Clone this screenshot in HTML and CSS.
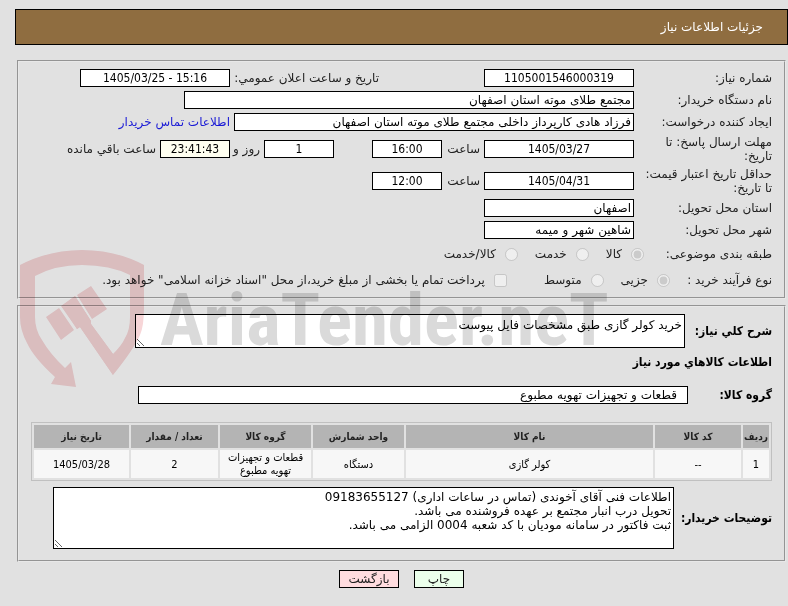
FILE: index.html
```html
<!DOCTYPE html>
<html lang="fa" dir="rtl">
<head>
  <meta charset="UTF-8" />
  <meta name="viewport" content="width=device-width, initial-scale=1" />
  <title>جزئیات اطلاعات نیاز</title>
  <link rel="stylesheet" href="styles.css">
</head>
<body>
  <h1 class="page-title">جزئیات اطلاعات نیاز</h1>

  <form class="need-form">
    <fieldset class="panel info">
      <div class="row">
        <label class="caption" for="needNo">شماره نیاز:</label>
        <input class="box medium center" id="needNo" value="1105001546000319" readonly>
        <label class="push-public" for="publicDate">تاریخ و ساعت اعلان عمومي:</label>
        <input class="box medium center" id="publicDate" dir="ltr" value="1405/03/25 - 15:16" readonly>
      </div>
      <div class="row">
        <label class="caption" for="buyerOrg">نام دستگاه خریدار:</label>
        <input class="box wide" id="buyerOrg" value="مجتمع طلای موته استان اصفهان" readonly>
      </div>
      <div class="row">
        <label class="caption" for="creator">ایجاد کننده درخواست:</label>
        <input class="box large" id="creator" value="فرزاد هادی کارپرداز داخلی مجتمع طلای موته استان اصفهان" readonly>
        <a class="contact" href="#">اطلاعات تماس خریدار</a>
      </div>
      <div class="row">
        <label class="caption" for="replyDate">مهلت ارسال پاسخ: تا تاریخ:</label>
        <input class="box medium center" id="replyDate" value="1405/03/27" readonly>
        <label class="hour" for="replyHour">ساعت</label>
        <input class="box short center" id="replyHour" value="16:00" readonly>
        <input class="box short center push-days" id="daysLeft" value="1" aria-label="روز" readonly>
        <label class="days" for="daysLeft">روز و</label>
        <input class="box short center timer" id="timeLeft" value="23:41:43" readonly>
        <label for="timeLeft">ساعت باقي مانده</label>
      </div>
      <div class="row">
        <label class="caption" for="priceDate">حداقل تاریخ اعتبار قیمت: تا تاریخ:</label>
        <input class="box medium center" id="priceDate" value="1405/04/31" readonly>
        <label class="hour" for="priceHour">ساعت</label>
        <input class="box short center" id="priceHour" value="12:00" readonly>
      </div>
      <div class="row">
        <label class="caption" for="province">استان محل تحویل:</label>
        <input class="box medium" id="province" value="اصفهان" readonly>
      </div>
      <div class="row">
        <label class="caption" for="city">شهر محل تحویل:</label>
        <input class="box medium" id="city" value="شاهین شهر و میمه" readonly>
      </div>
      <div class="row options">
        <span class="caption narrow">طبقه بندی موضوعی:</span>
        <span class="choice first"><input type="radio" name="kind" id="kindGoods" checked disabled><label for="kindGoods">کالا</label></span>
        <span class="choice"><input type="radio" name="kind" id="kindService" disabled><label for="kindService">خدمت</label></span>
        <span class="choice"><input type="radio" name="kind" id="kindBoth" disabled><label for="kindBoth">کالا/خدمت</label></span>
      </div>
      <div class="row options">
        <span class="caption narrow">نوع فرآیند خرید :</span>
        <span class="choice"><input type="radio" name="process" id="procSmall" checked disabled><label for="procSmall">جزیی</label></span>
        <span class="choice"><input type="radio" name="process" id="procMedium" disabled><label for="procMedium">متوسط</label></span>
        <span class="choice treasury"><input type="checkbox" id="treasury" disabled><label for="treasury">پرداخت تمام یا بخشی از مبلغ خرید،از محل "اسناد خزانه اسلامی" خواهد بود.</label></span>
      </div>
    </fieldset>

    <fieldset class="panel goods">
      <div class="row">
        <label class="heading summary-label" for="summary">شرح کلي نیاز:</label>
        <textarea class="box field summary" id="summary" readonly>خرید کولر گازی طبق مشخصات فایل پیوست</textarea>
      </div>
      <h2 class="heading section-title">اطلاعات کالاهاي مورد نیاز</h2>
      <div class="row">
        <label class="heading group-label" for="goodsGroup">گروه کالا:</label>
        <input class="box field group" id="goodsGroup" value="قطعات و تجهیزات تهویه مطبوع" readonly>
      </div>
      <table class="goods-table">
        <colgroup>
          <col class="col-row"><col class="col-code"><col><col class="col-unit"><col class="col-unit"><col class="col-count"><col class="col-date">
        </colgroup>
        <thead>
          <tr><th>ردیف</th><th>کد کالا</th><th>نام کالا</th><th>واحد شمارش</th><th>گروه کالا</th><th>تعداد / مقدار</th><th>تاریخ نیاز</th></tr>
        </thead>
        <tbody>
          <tr><td>1</td><td>--</td><td>کولر گازی</td><td>دستگاه</td><td>قطعات و تجهیزات تهویه مطبوع</td><td>2</td><td>1405/03/28</td></tr>
        </tbody>
      </table>
      <div class="row">
        <label class="heading notes-label" for="notes">توضیحات خریدار:</label>
        <textarea class="box field notes" id="notes" readonly>اطلاعات فنی آقای آخوندی (تماس در ساعات اداری) 09183655127
تحویل درب انبار مجتمع بر عهده فروشنده می باشد.
ثبت فاکتور در سامانه مودیان با کد شعبه 0004 الزامی می باشد.</textarea>
      </div>
    </fieldset>

    <div class="actions">
      <button class="btn print" type="button">چاپ</button>
      <button class="btn back" type="button">بازگشت</button>
    </div>
  </form>

  <div class="watermark" dir="ltr">
    <svg class="shield" width="126" height="140" viewBox="0 0 126 140" aria-hidden="true">
      <path d="M0 15Q29 0 62 0Q96 0 124 15V57Q124 76 120 85Q114 99 93 125L60 77L57 79L41 56L55 46L71 71L71 74L93 104Q102 95 105 88Q110 80 110 67V25Q90 15 62 15Q35 15 15 26V67Q15 80 22 90Q30 104 45 118L51 112L56 137L31 134L35 127Q14 108 7 93Q0 80 0 67Z"/>
      <path d="M42 56L55 46L71 71L71 74L93 104V125L60 77L57 79Z"/>
      <path d="M26 67L39 58L54 80L41 90ZM57 45L71 36L87 59L72 69Z"/>
    </svg>
    <span class="brand">AriaTender.neT</span>
  </div>
</body>
</html>
```
FILE: styles.css
```css
* { box-sizing: border-box; }
body {
  position: relative;
  margin: 0;
  padding: 9px 0 16px 15px;
  background: #e1e1e1;
  color: #222;
  font-family: "DejaVu Sans", Tahoma, sans-serif;
  font-size: 12px;
  line-height: 14px;
}
.page-title {
  margin: 0;
  padding: 10px 24px;
  border: 1px solid #000;
  background: #8f6d40;
  color: #fff;
  font-size: 12px;
  font-weight: normal;
  line-height: 14px;
}
.need-form { padding: 15px 2px 0; }
.panel {
  min-width: 0;
  margin: 0;
  border: 2px groove #e8e8e8;
}
.info {
  display: flex;
  flex-direction: column;
  gap: 4px;
  padding: 7px 12px 6px;
}
.row {
  display: flex;
  align-items: center;
  gap: 4px;
}
.row label, .row a {
  flex-shrink: 0;
  white-space: nowrap;
}
.row .caption {
  width: 134px;
  white-space: normal;
}
.row .narrow { width: 95px; flex-shrink: 0; white-space: nowrap; }
.box {
  height: 18px;
  margin: 0;
  padding: 0 2px;
  border: 1px solid #000;
  border-radius: 0;
  background: #fff;
  color: #000;
  font: inherit;
}
.center {
  font-family: "DejaVu Sans Condensed", Tahoma, sans-serif;
  text-align: center;
}
.short { width: 70px; }
.medium { width: 150px; }
.large { width: 400px; }
.wide { width: 450px; }
.hour { width: 34px; }
.days { width: 22px; margin-left: 4px; }
.push-public { width: 145px; margin-right: 101px; }
.push-days { margin-right: 34px; }
.timer { background: #fffff0; }
.contact { color: #1a1ad6; text-decoration: none; }
.options { height: 22px; }
.choice {
  display: flex;
  align-items: center;
  gap: 6px;
}
.choice input { margin: 0 3px; }
.options .choice { margin-left: 10px; }
.options .first { margin-right: 26px; }
.options .treasury { margin: 0 20px 0 0; }
.goods {
  margin-top: 6px;
  padding: 7px 12px 11px;
}
.heading {
  color: #000;
  font-family: "DejaVu Sans Condensed", Tahoma, sans-serif;
  font-size: 12px;
  font-weight: bold;
  line-height: 16px;
}
.section-title { margin: 6px 0 16px; }
.summary-label { width: 83px; }
.group-label { width: 80px; }
.notes-label { width: 94px; }
.field { flex: 0 1 550px; min-width: 0; }
.summary { height: 34px; padding-top: 3px; }
.group { padding-right: 10px; }
.notes { flex-basis: 621px; height: 62px; padding-top: 2px; }
.goods-table {
  width: 100%;
  margin: 18px 0 6px;
  border: 1px solid #c0c0c0;
  border-spacing: 2px;
  table-layout: fixed;
  font-family: "DejaVu Sans Condensed", Tahoma, sans-serif;
  font-size: 11px;
  line-height: 13px;
  text-align: center;
}
.goods-table th {
  height: 23px;
  padding: 0;
  background: #b4b4b4;
  font-size: 10px;
}
.goods-table td {
  height: 28px;
  padding: 0;
  background: #f7f7f7;
  color: #000;
}
.col-row { width: 26px; }
.col-code { width: 86px; }
.col-unit { width: 91px; }
.col-count { width: 87px; }
.col-date { width: 95px; }
.actions {
  display: flex;
  justify-content: center;
  gap: 15px;
  padding-top: 8px;
}
.btn {
  width: 60px;
  height: 18px;
  padding: 0;
  border: 1px solid #000;
  background: #ffdcdf;
  color: #222;
  font: inherit;
}
.print { width: 50px; background: #ebffeb; }

/* brand mark laid over the form */
.watermark {
  position: absolute;
  top: 250px;
  left: 20px;
  display: flex;
  align-items: center;
  gap: 14px;
  mix-blend-mode: multiply;
  pointer-events: none;
}
.shield { fill: #f7d6d8; }
.brand {
  color: #dadada;
  font-family: "Liberation Sans Narrow", "Roboto Condensed", Roboto, sans-serif;
  font-size: 73px;
  font-weight: bold;
  line-height: 80px;
}
```
